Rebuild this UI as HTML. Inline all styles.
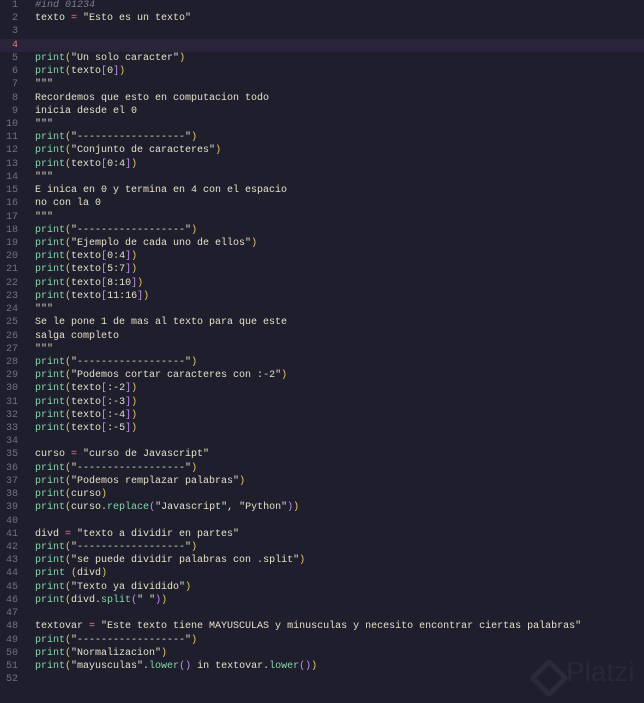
<!DOCTYPE html>
<html><head><meta charset="utf-8"><style>
body{margin:0;width:644px;height:703px;background:#1e1e2c;overflow:hidden;position:relative;font-family:"Liberation Mono",monospace;font-size:10px;color:#e6e0ca}
.l{position:absolute;left:0;width:644px;height:13.2px;line-height:13.2px;white-space:pre}
.n{position:absolute;left:0;width:18px;text-align:right;color:#6f7088}
.c{position:absolute;left:35px}
.p{color:#86d6a9}.y{color:#e8c766}.b{color:#c48ef2}.e{color:#f27aa0}.m{color:#7a7b8e;font-style:italic}.q{color:#d9d4c2}
.hl{background:#29243a}
</style></head><body>
<div id="w"></div>
<script>
var L=[
'<span class="m">#ind 01234</span>',
'texto <span class="e">=</span> "Esto es un texto"',
'',
'',
'<span class="p">print</span><span class="y">(</span>"Un solo caracter"<span class="y">)</span>',
'<span class="p">print</span><span class="y">(</span>texto<span class="b">[</span>0<span class="b">]</span><span class="y">)</span>',
'<span class="q">"""</span>',
'Recordemos que esto en computacion todo',
'inicia desde el 0',
'<span class="q">"""</span>',
'<span class="p">print</span><span class="y">(</span>"------------------"<span class="y">)</span>',
'<span class="p">print</span><span class="y">(</span>"Conjunto de caracteres"<span class="y">)</span>',
'<span class="p">print</span><span class="y">(</span>texto<span class="b">[</span>0:4<span class="b">]</span><span class="y">)</span>',
'<span class="q">"""</span>',
'E inica en 0 y termina en 4 con el espacio',
'no con la 0',
'<span class="q">"""</span>',
'<span class="p">print</span><span class="y">(</span>"------------------"<span class="y">)</span>',
'<span class="p">print</span><span class="y">(</span>"Ejemplo de cada uno de ellos"<span class="y">)</span>',
'<span class="p">print</span><span class="y">(</span>texto<span class="b">[</span>0:4<span class="b">]</span><span class="y">)</span>',
'<span class="p">print</span><span class="y">(</span>texto<span class="b">[</span>5:7<span class="b">]</span><span class="y">)</span>',
'<span class="p">print</span><span class="y">(</span>texto<span class="b">[</span>8:10<span class="b">]</span><span class="y">)</span>',
'<span class="p">print</span><span class="y">(</span>texto<span class="b">[</span>11:16<span class="b">]</span><span class="y">)</span>',
'<span class="q">"""</span>',
'Se le pone 1 de mas al texto para que este',
'salga completo',
'<span class="q">"""</span>',
'<span class="p">print</span><span class="y">(</span>"------------------"<span class="y">)</span>',
'<span class="p">print</span><span class="y">(</span>"Podemos cortar caracteres con :-2"<span class="y">)</span>',
'<span class="p">print</span><span class="y">(</span>texto<span class="b">[</span>:-2<span class="b">]</span><span class="y">)</span>',
'<span class="p">print</span><span class="y">(</span>texto<span class="b">[</span>:-3<span class="b">]</span><span class="y">)</span>',
'<span class="p">print</span><span class="y">(</span>texto<span class="b">[</span>:-4<span class="b">]</span><span class="y">)</span>',
'<span class="p">print</span><span class="y">(</span>texto<span class="b">[</span>:-5<span class="b">]</span><span class="y">)</span>',
'',
'curso <span class="e">=</span> "curso de Javascript"',
'<span class="p">print</span><span class="y">(</span>"------------------"<span class="y">)</span>',
'<span class="p">print</span><span class="y">(</span>"Podemos remplazar palabras"<span class="y">)</span>',
'<span class="p">print</span><span class="y">(</span>curso<span class="y">)</span>',
'<span class="p">print</span><span class="y">(</span>curso.<span class="p">replace</span><span class="b">(</span>"Javascript", "Python"<span class="b">)</span><span class="y">)</span>',
'',
'divd <span class="e">=</span> "texto a dividir en partes"',
'<span class="p">print</span><span class="y">(</span>"------------------"<span class="y">)</span>',
'<span class="p">print</span><span class="y">(</span>"se puede dividir palabras con .split"<span class="y">)</span>',
'<span class="p">print</span> <span class="y">(</span>divd<span class="y">)</span>',
'<span class="p">print</span><span class="y">(</span>"Texto ya dividido"<span class="y">)</span>',
'<span class="p">print</span><span class="y">(</span>divd.<span class="p">split</span><span class="b">(</span>" "<span class="b">)</span><span class="y">)</span>',
'',
'textovar <span class="e">=</span> "Este texto tiene MAYUSCULAS y minusculas y necesito encontrar ciertas palabras"',
'<span class="p">print</span><span class="y">(</span>"------------------"<span class="y">)</span>',
'<span class="p">print</span><span class="y">(</span>"Normalizacion"<span class="y">)</span>',
'<span class="p">print</span><span class="y">(</span>"mayusculas".<span class="p">lower</span><span class="b">()</span> in textovar.<span class="p">lower</span><span class="b">()</span><span class="y">)</span>',
'',''];
var h='';
for(var i=0;i<52;i++){
 var t=-1+i*13.22;
 h+='<div class="l'+(i==3?' hl':'')+'" style="top:'+t+'px"><span class="n"'+(i==3?' style="color:#e07a8a"':'')+'>'+(i+1)+'</span><span class="c">'+L[i]+'</span></div>';
}
document.getElementById('w').innerHTML=h;
</script>
<div style="position:absolute;left:535px;top:664px;width:18px;height:18px;border:5px solid #2a2b39;transform:rotate(45deg);border-radius:3px"></div>
<div style="position:absolute;left:566px;top:656px;font-family:'Liberation Sans',sans-serif;font-size:28px;color:#282937">Platzi</div>
</body></html>
